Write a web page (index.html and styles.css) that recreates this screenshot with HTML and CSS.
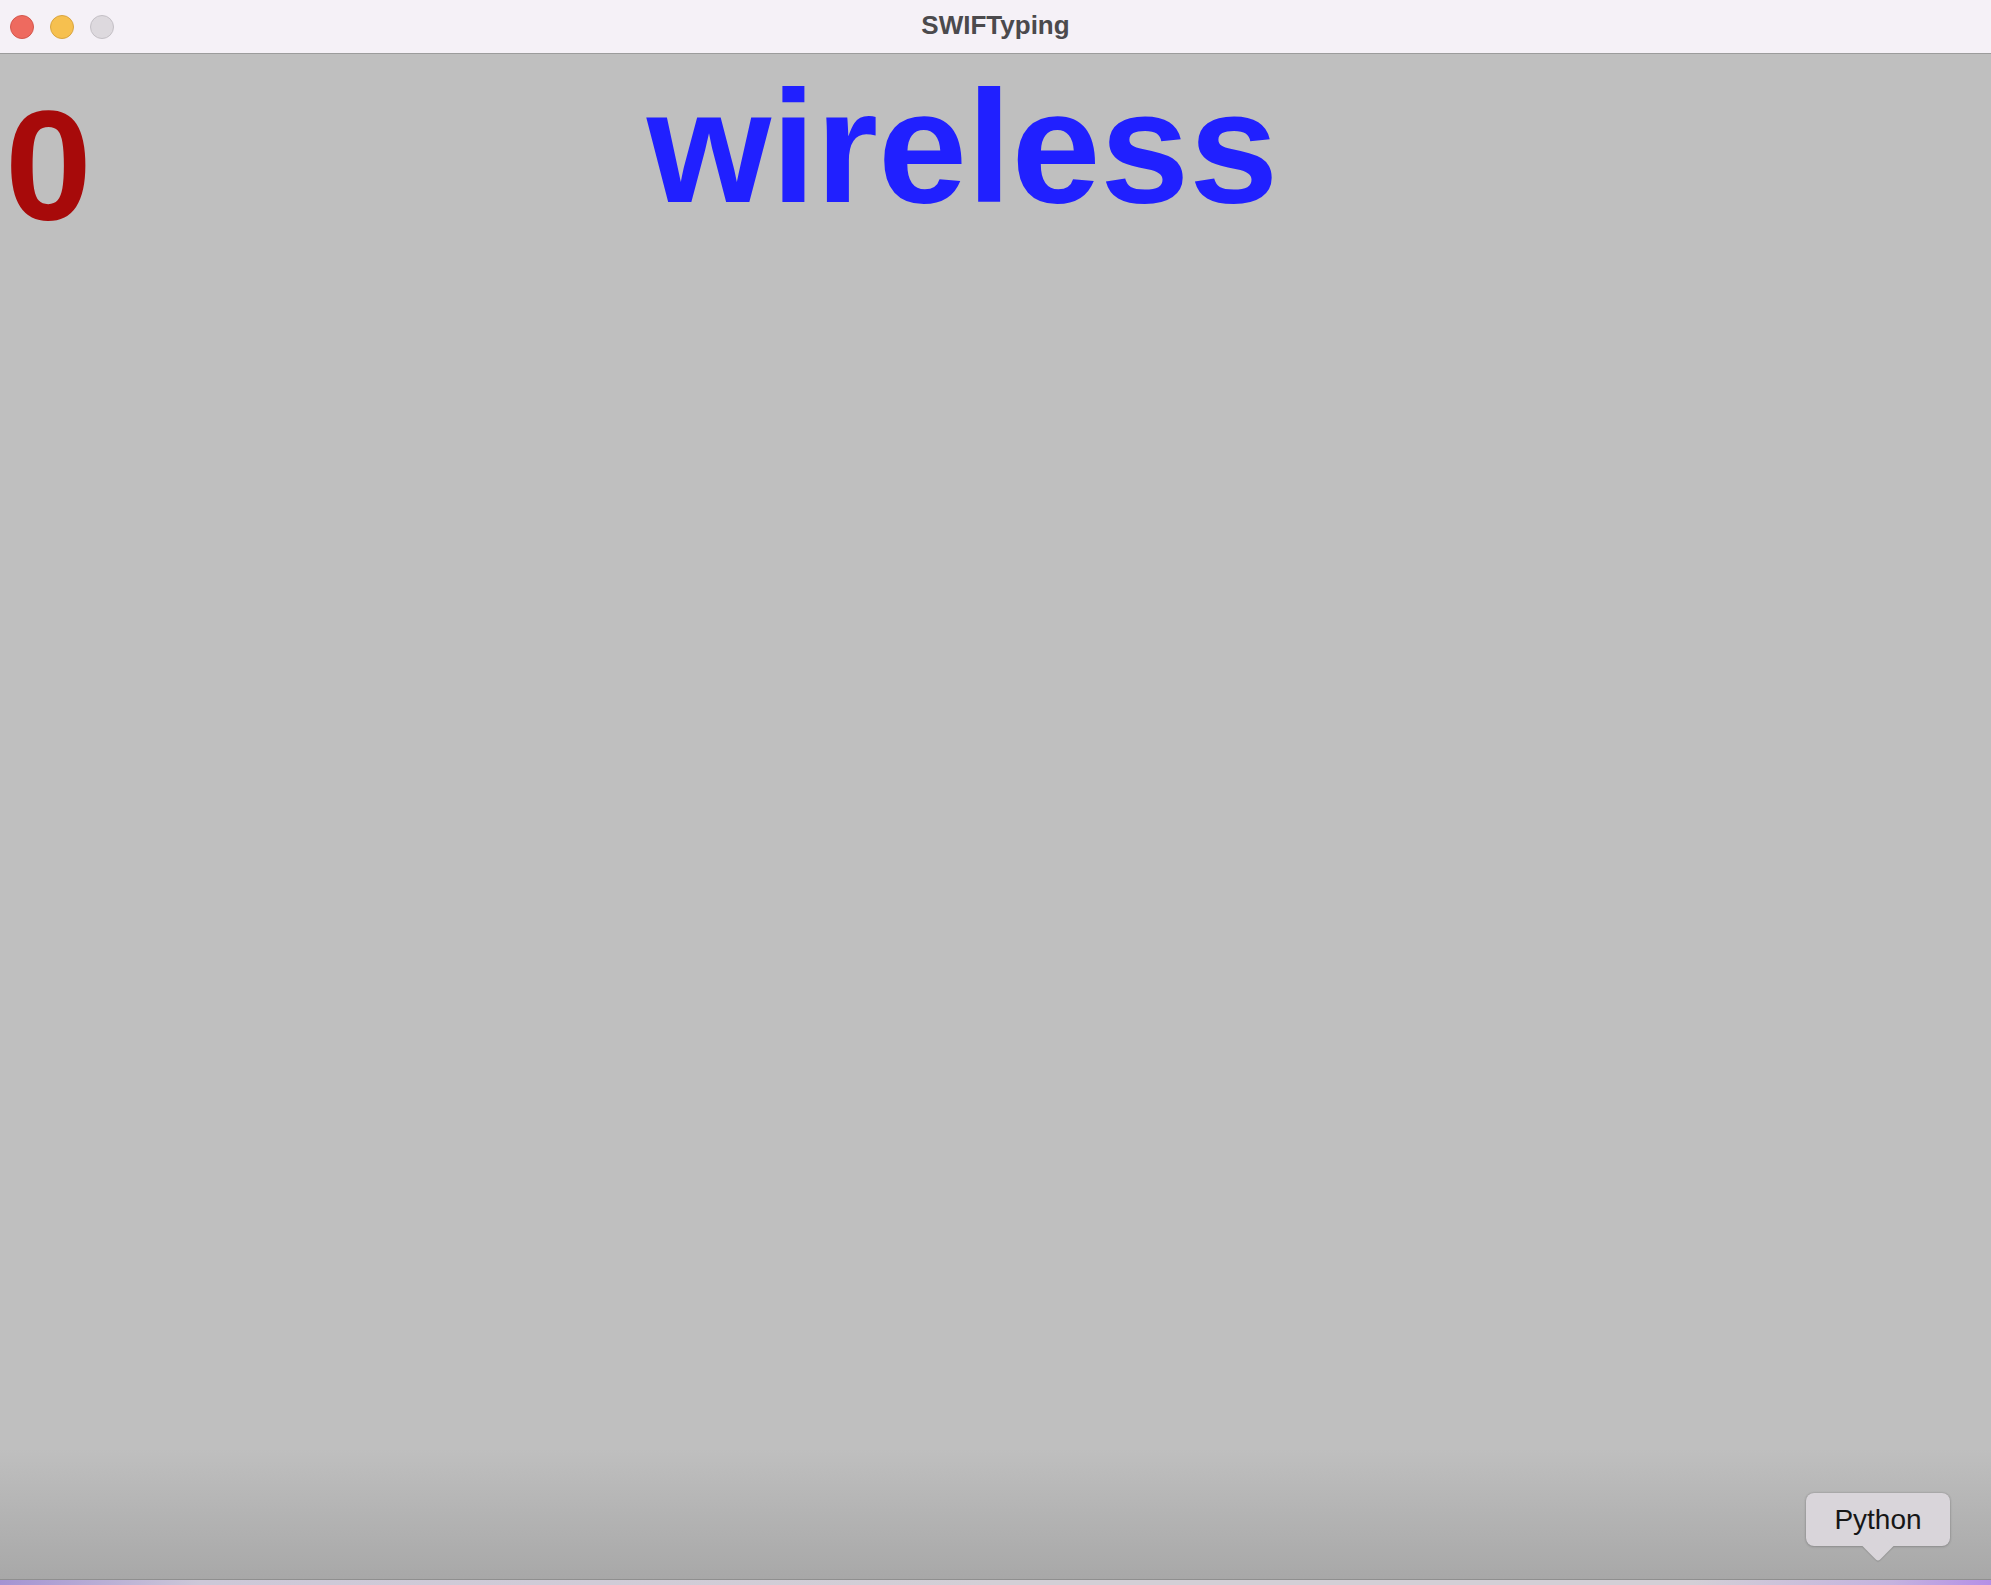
FILE: index.html
```html
<!DOCTYPE html>
<html lang="en">
<head>
<meta charset="utf-8">
<title>SWIFTyping</title>
<link rel="stylesheet" href="styles.css">
</head>
<body>
<div class="window">
  <header class="titlebar">
    <div class="lights">
      <span class="light light-close"></span>
      <span class="light light-min"></span>
      <span class="light light-max"></span>
    </div>
    <div class="title">SWIFTyping</div>
    <div class="spacer"></div>
  </header>
  <main class="content">
    <div class="top">
      <div class="score">0</div>
      <div class="word">wireless</div>
    </div>
    <div class="tooltip">Python</div>
  </main>
  <div class="bottom-strip"></div>
</div>
</body>
</html>
```

FILE: styles.css
```css
html, body {
  margin: 0;
  padding: 0;
  height: 100%;
}

body {
  font-family: "Liberation Sans", Arial, sans-serif;
  overflow: hidden;
}

.window {
  height: 100vh;
  display: flex;
  flex-direction: column;
}

.titlebar {
  height: 53px;
  flex: 0 0 53px;
  background: #f5f1f7;
  border-bottom: 1px solid #9c9c9c;
  display: grid;
  grid-template-columns: 1fr auto 1fr;
  align-items: center;
}

.lights {
  display: flex;
  gap: 16px;
  padding-left: 10px;
  padding-top: 1px;
}

.light {
  width: 22px;
  height: 22px;
  border-radius: 50%;
  border: 1px solid transparent;
}

.light-close {
  background: #ee6a5f;
  border-color: #d4574d;
}

.light-min {
  background: #f6c04f;
  border-color: #d9a540;
}

.light-max {
  background: #ddd9de;
  border-color: #c4c0c6;
}

.title {
  font-weight: bold;
  font-size: 26px;
  line-height: 50px;
  color: #4b4a4d;
  padding-bottom: 3px;
}

.content {
  flex: 1;
  position: relative;
  background: linear-gradient(to bottom, #bfbfbf 0, #bfbfbf calc(100% - 130px), #a8a8a8 100%);
}

.top {
  display: flex;
  align-items: flex-start;
}

.score {
  font-weight: bold;
  font-size: 156px;
  line-height: 1;
  color: #a70a0a;
  margin: 33px 0 0 5px;
}

.word {
  font-weight: bold;
  font-size: 160px;
  line-height: 1;
  color: #2020ff;
  margin: 13px 0 0 555px;
}

.tooltip {
  position: absolute;
  right: 41px;
  bottom: 33px;
  width: 144px;
  height: 53px;
  box-sizing: border-box;
  background: #d9d5da;
  border-radius: 8px;
  box-shadow: 0 0 2px rgba(0, 0, 0, 0.25), 0 1px 3px rgba(0, 0, 0, 0.12);
  font-size: 28px;
  line-height: 53px;
  text-align: center;
  color: #161616;
  z-index: 1;
  isolation: isolate;
}

.tooltip::after {
  content: "";
  position: absolute;
  left: 50%;
  bottom: -11px;
  width: 22px;
  height: 22px;
  margin-left: -11px;
  background: #d9d5da;
  transform: rotate(45deg);
  border-radius: 0 0 3px 0;
  box-shadow: 1px 1px 1px rgba(0, 0, 0, 0.12);
  z-index: -1;
}

.bottom-strip {
  flex: 0 0 6px;
  height: 6px;
  border-top: 1px solid #8f8f8f;
  box-sizing: border-box;
  background: linear-gradient(to right, #a493d2 0, #cdc8d8 200px, #d3cfd6 50%, #d3cfd6 85%, #c4b3df 95%, #b48fe6 100%);
}
```
